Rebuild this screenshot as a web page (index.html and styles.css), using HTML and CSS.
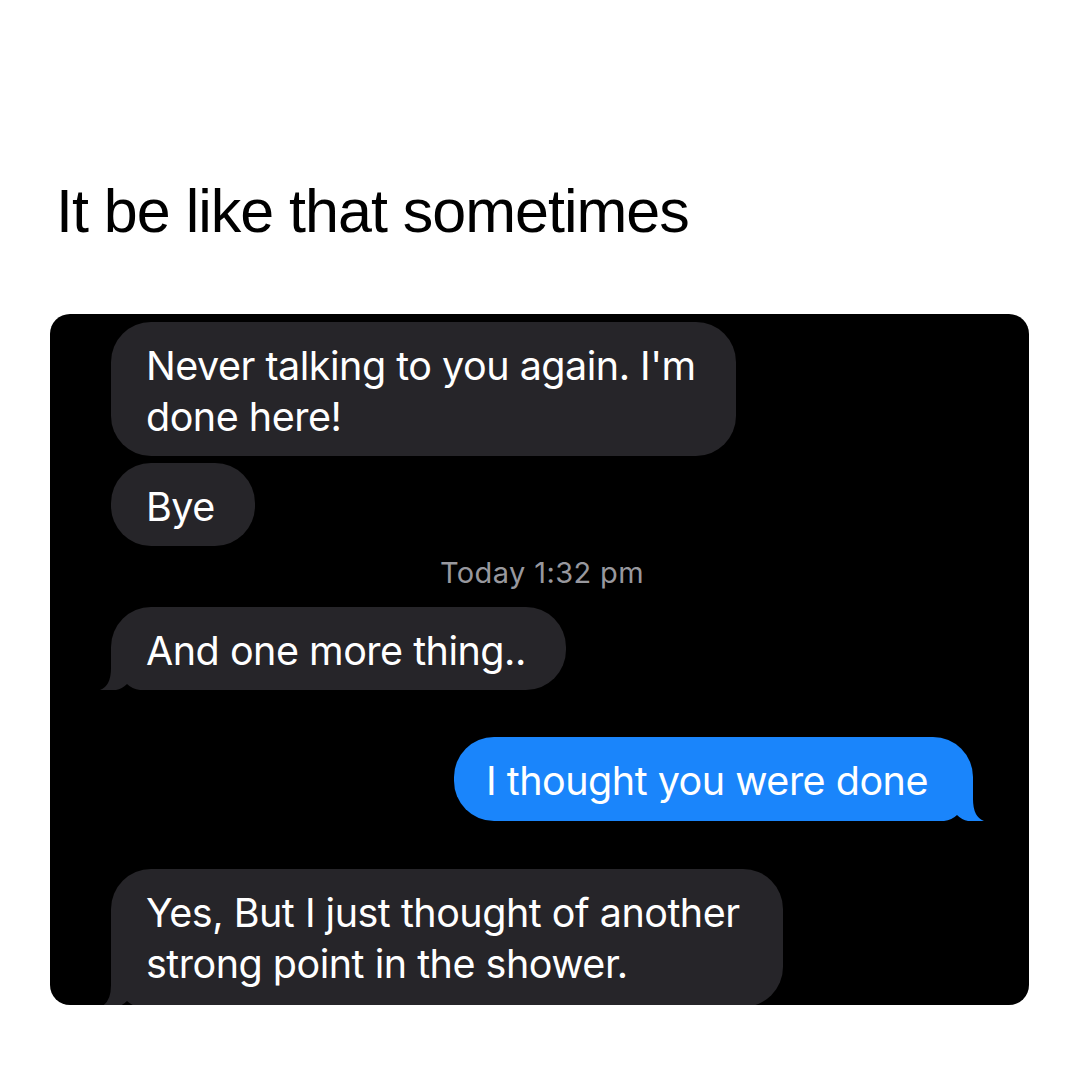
FILE: index.html
```html
<!DOCTYPE html>
<html lang="en">
<head>
<meta charset="utf-8">
<title>It be like that sometimes</title>
<link rel="stylesheet" href="styles.css">
</head>
<body>
<div class="page">
  <h1 class="title">It be like that sometimes</h1>
  <div class="chat">
    <div class="row">
      <div class="bubble received"><span class="txt">Never talking to you again. I'm<br>done here!</span></div>
    </div>
    <div class="row row-tight">
      <div class="bubble received"><span class="txt">Bye</span></div>
    </div>
    <div class="stamp">Today 1:32 pm</div>
    <div class="row">
      <div class="bubble received"><span class="txt">And one more thing..</span>
        <svg class="tail tail-left" viewBox="0 0 51 42" width="51" height="42"><path d="M11 0 L11 20 Q11 38 0 42 L16 42 Q22 41 27 36 Q32 41 40 42 L51 42 L51 0 Z"/></svg>
      </div>
    </div>
    <div class="row row-sent">
      <div class="bubble sent"><span class="txt">I thought you were done</span>
        <svg class="tail tail-right" viewBox="0 0 51 42" width="51" height="42"><path d="M11 0 L11 20 Q11 38 0 42 L16 42 Q22 41 27 36 Q32 41 40 42 L51 42 L51 0 Z"/></svg>
      </div>
    </div>
    <div class="row row-last">
      <div class="bubble received bubble-last"><span class="txt">Yes, But I just thought of another<br>strong point in the shower.</span>
        <svg class="tail tail-left" viewBox="0 0 51 42" width="51" height="42"><path d="M11 0 L11 20 Q11 38 0 42 L16 42 Q22 41 27 36 Q32 41 40 42 L51 42 L51 0 Z"/></svg>
      </div>
    </div>
  </div>
</div>
</body>
</html>
```

FILE: styles.css
```css
html, body {
  margin: 0;
  padding: 0;
  background: #ffffff;
}

.page {
  width: 1080px;
  height: 1080px;
  display: flex;
  flex-direction: column;
}

.title {
  margin: 181px 0 0 56px;
  font-family: "Liberation Sans", Arial, sans-serif;
  font-weight: 400;
  font-size: 61px;
  line-height: 60px;
  letter-spacing: -1px;
  color: #000000;
}

.chat {
  margin: 73px 0 0 50px;
  width: 979px;
  height: 691px;
  flex-shrink: 0;
  box-sizing: border-box;
  padding: 8px 56px 0 61px;
  background: #000000;
  border-radius: 20px;
  overflow: hidden;
  display: flex;
  flex-direction: column;
  font-family: Inter, "Liberation Sans", sans-serif;
}

.row {
  display: flex;
  flex-shrink: 0;
}

.row-tight {
  margin-top: 7px;
}

.row-sent {
  justify-content: flex-end;
  margin-top: 47px;
}

.row-last {
  margin-top: 48px;
}

.bubble {
  position: relative;
  box-sizing: border-box;
  padding: 19px 40px 13px 35px;
  border-radius: 40px;
  font-size: 39.5px;
  line-height: 51px;
  letter-spacing: -0.5px;
  color: #ffffff;
}

.bubble-last {
  padding-right: 43px;
  padding-bottom: 17px;
}

.txt {
  position: relative;
  z-index: 1;
}

.received {
  background: #262529;
}

.sent {
  background: #1a85fb;
  padding: 19px 45px 14px 32px;
}

.tail {
  position: absolute;
  bottom: 0;
}

.tail-left {
  left: -11px;
  fill: #262529;
}

.tail-right {
  right: -11px;
  fill: #1a85fb;
  transform: scaleX(-1);
}

.stamp {
  height: 61px;
  flex-shrink: 0;
  line-height: 54px;
  text-align: center;
  font-size: 29px;
  letter-spacing: 0.4px;
  color: #98989e;
}
```
